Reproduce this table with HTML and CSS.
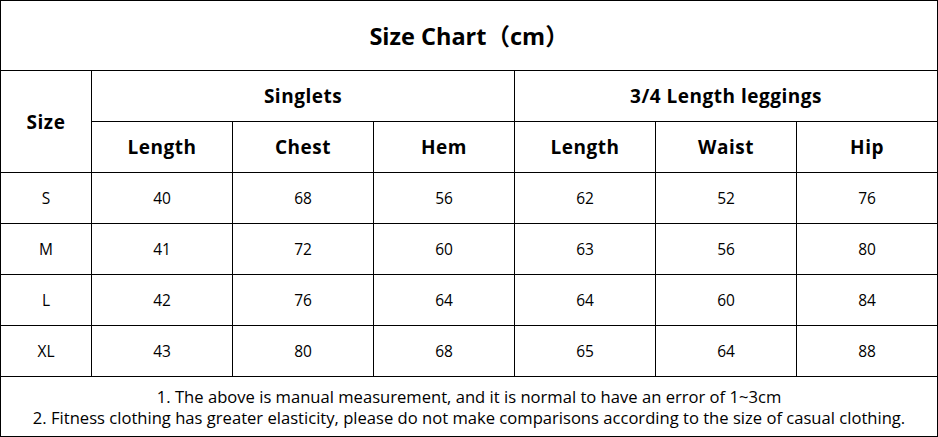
FILE: index.html
```html
<!DOCTYPE html>
<html>
<head>
<meta charset="utf-8">
<link rel="stylesheet" href="styles.css">
</head>
<body>
<table class="chart">
  <colgroup>
    <col class="c-size">
    <col class="c-val"><col class="c-val"><col class="c-val">
    <col class="c-val"><col class="c-val"><col class="c-val">
  </colgroup>
  <tr class="r-title"><td colspan="7" class="title">Size Chart（cm）</td></tr>
  <tr class="r-head"><td rowspan="2" class="head">Size</td><td colspan="3" class="head">Singlets</td><td colspan="3" class="head">3/4 Length leggings</td></tr>
  <tr class="r-head"><td class="head">Length</td><td class="head">Chest</td><td class="head">Hem</td><td class="head">Length</td><td class="head">Waist</td><td class="head">Hip</td></tr>
  <tr class="r-data"><td>S</td><td>40</td><td>68</td><td>56</td><td>62</td><td>52</td><td>76</td></tr>
  <tr class="r-data"><td>M</td><td>41</td><td>72</td><td>60</td><td>63</td><td>56</td><td>80</td></tr>
  <tr class="r-data"><td>L</td><td>42</td><td>76</td><td>64</td><td>64</td><td>60</td><td>84</td></tr>
  <tr class="r-data"><td>XL</td><td>43</td><td>80</td><td>68</td><td>65</td><td>64</td><td>88</td></tr>
  <tr class="r-note"><td colspan="7" class="note">1. The above is manual measurement, and it is normal to have an error of 1~3cm<br>2. Fitness clothing has greater elasticity, please do not make comparisons according to the size of casual clothing.</td></tr>
</table>
</body>
</html>
```
FILE: styles.css
```css
html, body {
  margin: 0;
  padding: 0;
  background: #fff;
}
.chart {
  border-collapse: collapse;
  table-layout: fixed;
  width: 938px;
  font-family: "Open Sans", "Noto Sans", "Noto Sans CJK SC", sans-serif;
  color: #000;
}
.c-size { width: 91px; }
.c-val { width: 141px; }
.chart td {
  border: 1px solid #000;
  padding: 0;
  text-align: center;
  vertical-align: middle;
  font-size: 15.5px;
  line-height: 20px;
}
.r-title td { height: 69px; }
.r-head td { height: 50px; }
.r-data td { height: 50px; }
.r-note td { height: 59px; }
.chart td.title {
  font-size: 23.5px;
  line-height: 28px;
  font-weight: 700;
}
.chart td.head {
  font-size: 19px;
  line-height: 24px;
  font-weight: 700;
  letter-spacing: 0.5px;
}
.chart td.note {
  font-size: 16.6px;
  line-height: 21px;
}
```
